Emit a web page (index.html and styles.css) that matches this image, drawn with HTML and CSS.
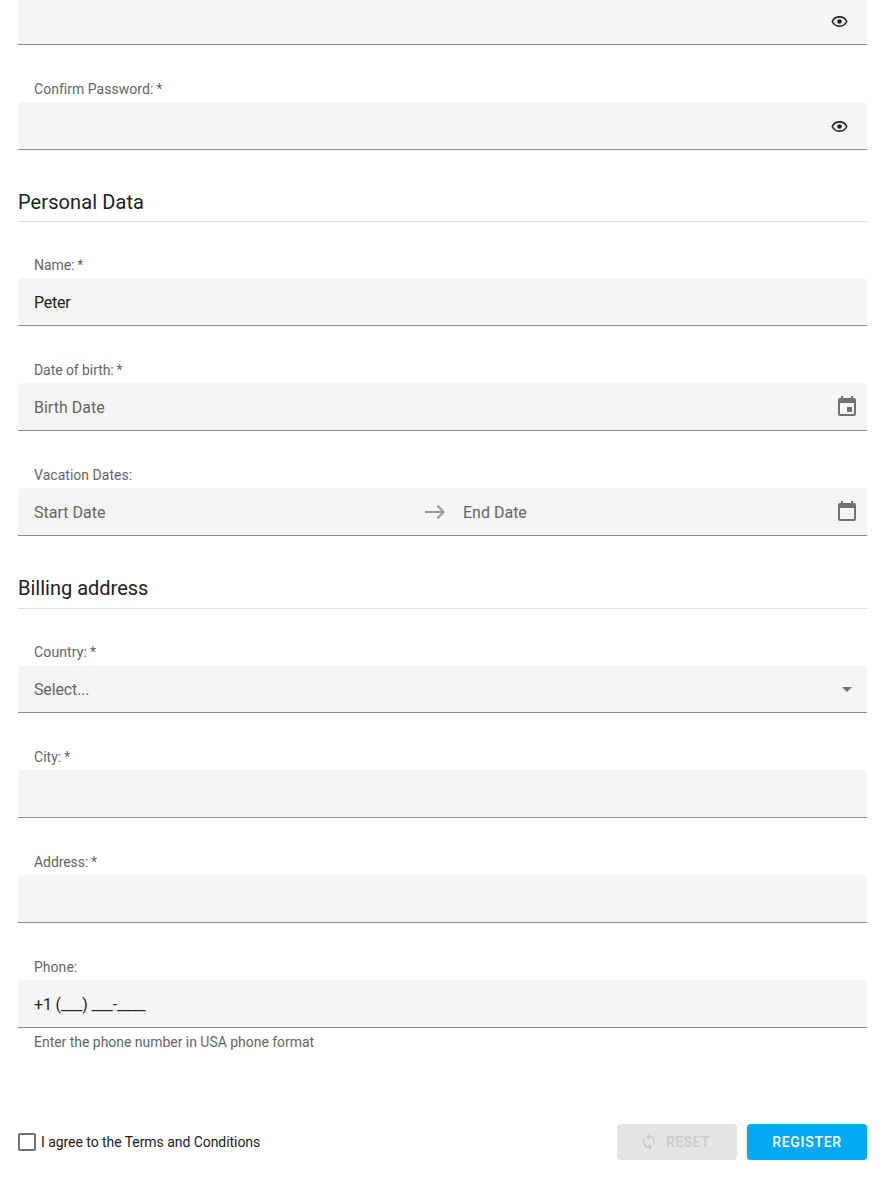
FILE: index.html
```html
<!DOCTYPE html>
<html lang="en">
<head>
<meta charset="utf-8">
<title>Registration</title>
<link rel="stylesheet" href="styles.css">
</head>
<body>
<form class="form">
  <div class="box box-cut"><svg class="eye" viewBox="0 0 18 18"><path d="M1.300 9C2.800 5.800 5.800 4.100 9 4.100S15.200 5.800 16.700 9C15.200 12.200 12.200 13.900 9 13.900S2.800 12.200 1.300 9Z" fill="none" stroke="#212121" stroke-width="1.600"/><circle cx="9" cy="9" r="2.400" fill="#212121"/></svg></div>
  <div class="field"><div class="label">Confirm Password:<span class="mark"> *</span></div><div class="box"><svg class="eye" viewBox="0 0 18 18"><path d="M1.300 9C2.800 5.800 5.800 4.100 9 4.100S15.200 5.800 16.700 9C15.200 12.200 12.200 13.900 9 13.900S2.800 12.200 1.300 9Z" fill="none" stroke="#212121" stroke-width="1.600"/><circle cx="9" cy="9" r="2.400" fill="#212121"/></svg></div></div>

  <h2 class="caption caption-personal">Personal Data</h2>
  <div class="field"><div class="label tight">Name:<span class="mark"> *</span></div><div class="box"><span class="value name">Peter</span></div></div>
  <div class="field"><div class="label tight">Date of birth:<span class="mark"> *</span></div><div class="box"><span class="hint">Birth Date</span><svg class="calendar" viewBox="0 0 18 20"><path fill="#717171" fill-rule="evenodd" d="M3 0h2v2h8V0h2v2h1a2 2 0 0 1 2 2v14a2 2 0 0 1-2 2H2a2 2 0 0 1-2-2V4a2 2 0 0 1 2-2h1ZM2 7v11h14V7ZM9 11h5v5H9Z"/></svg></div></div>
  <div class="field"><div class="label">Vacation Dates:</div><div class="box"><span class="hint range-start">Start Date</span><svg class="arrow" viewBox="0 0 20 14"><path d="M0 7h18.500M12.500 .8L18.700 7l-6.200 6.200" fill="none" stroke="#959595" stroke-width="2"/></svg><span class="hint">End Date</span><svg class="calendar" viewBox="0 0 18 20"><path fill="#717171" fill-rule="evenodd" d="M3 0h2v2h8V0h2v2h1a2 2 0 0 1 2 2v14a2 2 0 0 1-2 2H2a2 2 0 0 1-2-2V4a2 2 0 0 1 2-2h1ZM2 7v11h14V7Z"/></svg></div></div>

  <h2 class="caption caption-billing">Billing address</h2>
  <div class="field"><div class="label loose">Country:<span class="mark"> *</span></div><div class="box"><span class="hint select">Select...</span><svg class="caret" viewBox="0 0 10 5"><path d="M0 0h10L5 5Z" fill="#717171"/></svg></div></div>
  <div class="field"><div class="label">City:<span class="mark"> *</span></div><div class="box"></div></div>
  <div class="field"><div class="label tight">Address:<span class="mark"> *</span></div><div class="box"></div></div>
  <div class="field"><div class="label">Phone:</div><div class="box"><span class="value phone">+1 (___) ___-____</span></div></div>
  <div class="help">Enter the phone number in USA phone format</div>

  <div class="footer">
    <span class="check"></span><span class="agree">I agree to the Terms and Conditions</span>
    <div class="button reset"><svg class="sync" viewBox="0 0 24 24"><path fill="#c8c8c8" d="M12 4V1L8 5l4 4V6c3.310 0 6 2.690 6 6 0 1.010-.25 1.970-.7 2.800l1.460 1.460C19.540 15.030 20 13.570 20 12c0-4.420-3.580-8-8-8zm0 14c-3.310 0-6-2.690-6-6 0-1.010.25-1.970.7-2.800L5.240 7.740C4.460 8.970 4 10.430 4 12c0 4.420 3.580 8 8 8v3l4-4-4-4v3z"/></svg>Reset</div>
    <div class="button register">Register</div>
  </div>
</form>
</body>
</html>
```
FILE: styles.css
```css
body {
  margin: 0;
  background: #fff;
  color: #212121;
  font-family: Roboto, "Liberation Sans", sans-serif;
  font-size: 14px;
}

.form {
  display: flex;
  flex-direction: column;
  padding: 0 18px;
}

.field {
  margin-top: 32px;
}

.label {
  height: 25px;
  line-height: 25px;
  padding-left: 16px;
  color: #666;
  letter-spacing: .03px;
}

.tight {
  letter-spacing: -.07px;
}

.loose {
  letter-spacing: .14px;
}

.mark {
  letter-spacing: -.6px;
}

.box {
  display: flex;
  align-items: center;
  box-sizing: border-box;
  height: 48px;
  padding: 1px 11px 0 16px;
  border-bottom: 1px solid #8c8c8c;
  border-radius: 4px 4px 0 0;
  background: #f5f5f5;
  font-size: 16px;
}

.box-cut {
  height: 45px;
  padding-top: 0;
  padding-bottom: 1px;
  border-radius: 0;
}

.value {
  color: #212121;
}

.name {
  letter-spacing: -.25px;
}

.phone {
  letter-spacing: -.14px;
}

.hint {
  color: #666;
}

.select {
  letter-spacing: -.14px;
}

.eye {
  width: 17px;
  height: 17px;
  margin-left: auto;
  margin-right: 8px;
}

.box:not(.box-cut) .eye {
  margin-top: 1px;
}

.calendar {
  width: 18px;
  height: 20px;
  margin-left: auto;
  margin-top: -2px;
}

.range-start {
  width: 391px;
}

.arrow {
  width: 20px;
  height: 14px;
  margin-right: 18px;
}

.caret {
  width: 10px;
  height: 5px;
  margin-left: auto;
  margin-right: 4px;
}

.caption {
  box-sizing: border-box;
  height: 40px;
  margin: 32px 0 -1px;
  border-bottom: 1px solid #e0e0e0;
  font-size: 20px;
  font-weight: 400;
  line-height: 40px;
}

.caption-personal {
  letter-spacing: .1px;
}

.caption-billing {
  height: 41px;
}

.help {
  height: 28px;
  padding-left: 16px;
  color: #666;
  line-height: 28px;
  letter-spacing: -.03px;
}

.footer {
  display: flex;
  align-items: center;
  height: 36px;
  margin-top: 68px;
}

.check {
  box-sizing: border-box;
  width: 18px;
  height: 18px;
  margin-right: 5px;
  border: 2px solid #717171;
  border-radius: 2px;
}

.agree {
  margin-right: auto;
  letter-spacing: -.055px;
}

.button {
  display: flex;
  align-items: center;
  justify-content: center;
  width: 120px;
  height: 36px;
  margin-left: 10px;
  border-radius: 4px;
  font-weight: 500;
  letter-spacing: .7px;
  text-transform: uppercase;
}

.reset {
  box-sizing: border-box;
  padding-right: 4px;
  background: #e4e4e4;
  color: #cacaca;
  letter-spacing: .4px;
}

.register {
  background: #03a9f4;
  color: #fff;
  box-shadow: 0 1px 3px rgba(0, 0, 0, .24);
}

.sync {
  width: 18px;
  height: 18px;
  margin-right: 8px;
}
```
